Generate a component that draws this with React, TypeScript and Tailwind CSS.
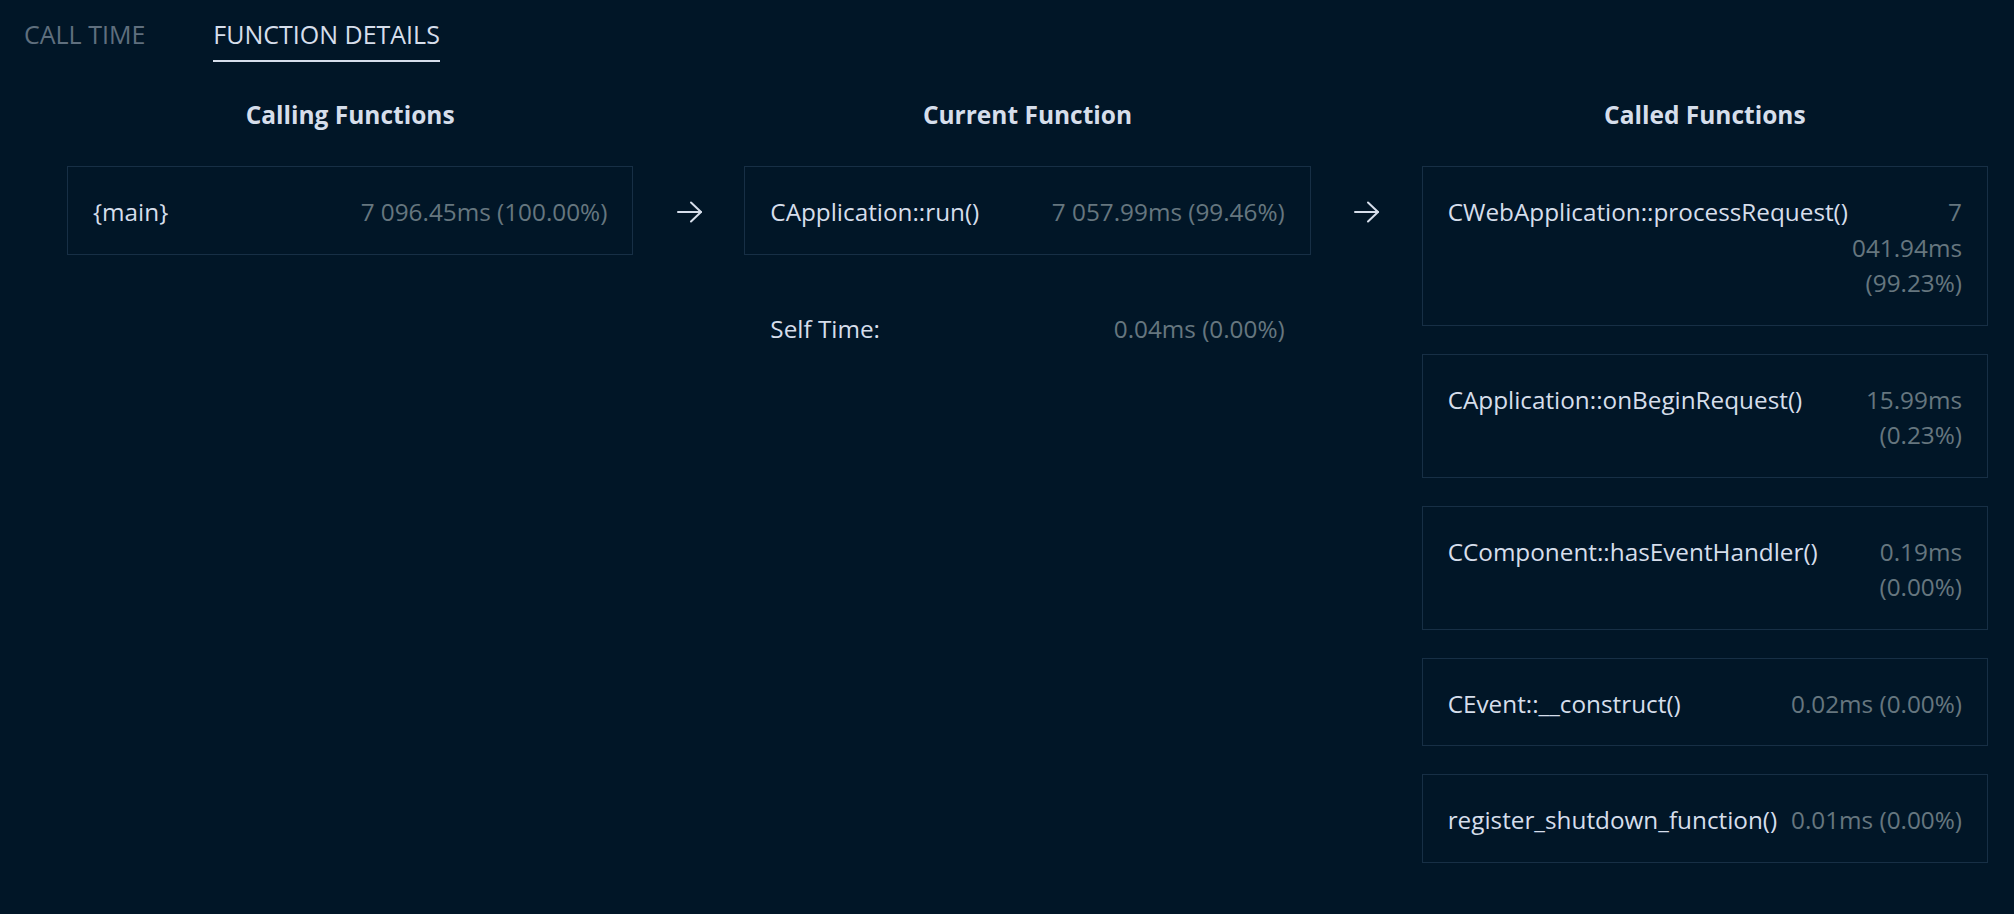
import React from "react";

type Item = { name: string; value: string[] };

const calling: Item[] = [{ name: "{main}", value: ["7 096.45ms (100.00%)"] }];
const current: Item[] = [{ name: "CApplication::run()", value: ["7 057.99ms (99.46%)"] }];
const called: Item[] = [
  { name: "CWebApplication::processRequest()", value: ["7", "041.94ms", "(99.23%)"] },
  { name: "CApplication::onBeginRequest()", value: ["15.99ms", "(0.23%)"] },
  { name: "CComponent::hasEventHandler()", value: ["0.19ms", "(0.00%)"] },
  { name: "CEvent::__construct()", value: ["0.02ms (0.00%)"] },
  { name: "register_shutdown_function()", value: ["0.01ms (0.00%)"] },
];

function Row({ item, bordered = true }: { item: Item; bordered?: boolean }) {
  return (
    <div
      className={
        "flex min-w-0 justify-between gap-[4px] border px-[25px] pt-[27px] pb-[24px] text-[24.3px] leading-[35.5px] " +
        (bordered ? "border-[#172f45]" : "border-transparent")
      }
    >
      <span className="whitespace-nowrap text-[#d6deeb]">{item.name}</span>
      <span className="flex flex-col items-end text-right text-[#66767f]">
        {item.value.map((v, i) => (
          <span key={i} className="whitespace-nowrap">
            {v}
          </span>
        ))}
      </span>
    </div>
  );
}

function Arrow() {
  return (
    <div className="flex h-[92px] items-center justify-center pl-[2px]">
      <svg width="26" height="22" viewBox="0 0 26 22" fill="none" stroke="#d6deeb" strokeWidth="2" strokeLinecap="round" strokeLinejoin="round">
        <path d="M1 11H24" />
        <path d="M14 1.5L24 11L14 20.5" />
      </svg>
    </div>
  );
}

function Heading({ children }: { children: React.ReactNode }) {
  return (
    <div className="mb-[33px] pt-[1px] text-center text-[24.5px] font-bold leading-[36px] text-[#d6deeb]">{children}</div>
  );
}

export default function App() {
  return (
    <div className="min-h-screen w-full bg-[#011627] font-['Open_Sans',sans-serif]">
      <div className="flex gap-[68px] pl-[24px] pt-[16px]">
        <div className="border-b-2 border-transparent pb-[8px] text-[25px] leading-[36px] text-[#5f6f7e]">CALL TIME</div>
        <div className="border-b-2 border-[#d6deeb] pb-[8px] text-[25px] leading-[36px] text-[#d6deeb]">FUNCTION DETAILS</div>
      </div>

      <div className="mt-[34px] grid grid-cols-[minmax(0,1fr)_111px_minmax(0,1fr)_111px_minmax(0,1fr)] pl-[67px] pr-[26px]">
        <Heading>Calling Functions</Heading>
        <div />
        <Heading>Current Function</Heading>
        <div />
        <Heading>Called Functions</Heading>

        <div className="flex flex-col gap-[28px]">
          {calling.map((it) => (
            <Row key={it.name} item={it} />
          ))}
        </div>
        <Arrow />
        <div className="flex flex-col gap-[28px]">
          {current.map((it) => (
            <Row key={it.name} item={it} />
          ))}
          <Row item={{ name: "Self Time:", value: ["0.04ms (0.00%)"] }} bordered={false} />
        </div>
        <Arrow />
        <div className="flex flex-col gap-[28px]">
          {called.map((it) => (
            <Row key={it.name} item={it} />
          ))}
        </div>
      </div>
    </div>
  );
}
